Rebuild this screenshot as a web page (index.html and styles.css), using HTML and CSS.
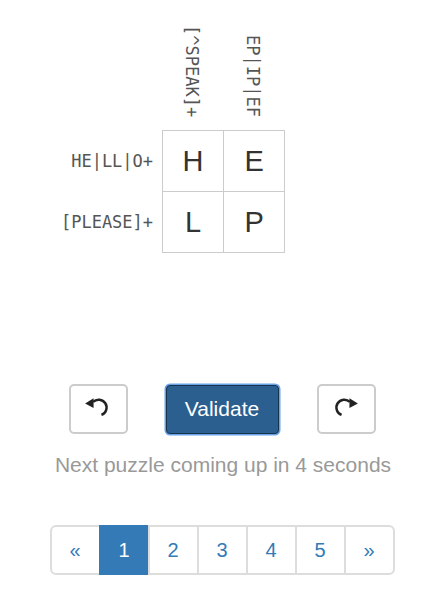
FILE: index.html
```html
<!DOCTYPE html>
<html>
<head>
<meta charset="utf-8">
<link rel="stylesheet" href="styles.css">
</head>
<body>
<div class="page">
  <table class="board">
    <tr class="heads">
      <th class="side"></th>
      <th class="colhead"><span class="vtext">[^SPEAK]+</span></th>
      <th class="colhead"><span class="vtext">EP|IP|EF</span></th>
      <th class="side"></th>
    </tr>
    <tr>
      <th class="rowhead">HE|LL|O+</th>
      <td class="cell">H</td>
      <td class="cell">E</td>
      <td class="side"></td>
    </tr>
    <tr>
      <th class="rowhead">[PLEASE]+</th>
      <td class="cell">L</td>
      <td class="cell">P</td>
      <td class="side"></td>
    </tr>
  </table>

  <div class="controls">
    <button class="btn icon-btn" aria-label="Undo">
      <svg class="ico" width="27" height="25" viewBox="0 0 24 22"><path d="M8.1 6.1 A7 7 0 1 1 15.5 17.6" fill="none" stroke="#222" stroke-width="2.2"/><path d="M1 7.5 L8.5 2.8 L8.5 11.5 Z" fill="#222"/></svg>
    </button>
    <button class="btn validate">Validate</button>
    <button class="btn icon-btn" aria-label="Redo">
      <svg class="ico" width="27" height="25" viewBox="0 0 24 22"><g transform="translate(24 0) scale(-1 1)"><path d="M8.1 6.1 A7 7 0 1 1 15.5 17.6" fill="none" stroke="#222" stroke-width="2.2"/><path d="M1 7.5 L8.5 2.8 L8.5 11.5 Z" fill="#222"/></g></svg>
    </button>
  </div>

  <p class="next">Next puzzle coming up in 4 seconds</p>

  <ul class="pager">
    <li><a>&laquo;</a></li>
    <li class="active"><a>1</a></li>
    <li><a>2</a></li>
    <li><a>3</a></li>
    <li><a>4</a></li>
    <li><a>5</a></li>
    <li><a>&raquo;</a></li>
  </ul>
</div>
</body>
</html>
```
FILE: styles.css
```css
html, body {
  margin: 0;
  padding: 0;
  background: #fff;
}
body {
  font-family: "Liberation Sans", Arial, sans-serif;
  color: #333;
}
.page {
  padding: 20px 0 0 16px;
  width: 414px;
}
.board {
  border-collapse: collapse;
  margin: 0 auto;
}
.side {
  width: 100px;
  padding: 0;
}
.heads th {
  height: 101px;
  padding: 0 0 9px 0;
  vertical-align: bottom;
}
.colhead {
  text-align: center;
  font-weight: normal;
}
.vtext {
  display: inline-block;
  writing-mode: vertical-rl;
  font-family: "DejaVu Sans Mono", monospace;
  font-size: 17px;
  color: #555;
  line-height: 1;
  margin-right: 4px;
}
.rowhead {
  font-family: "DejaVu Sans Mono", monospace;
  font-size: 17px;
  font-weight: normal;
  color: #555;
  text-align: right;
  padding: 0 9px 0 0;
  white-space: nowrap;
}
.cell {
  width: 60px;
  height: 60px;
  padding: 0;
  border: 1px solid #ccc;
  text-align: center;
  vertical-align: middle;
  font-size: 29px;
  color: #333;
}
.controls {
  display: flex;
  justify-content: center;
  align-items: center;
  gap: 38px;
  margin-top: 131px;
  padding-right: 2px;
}
.btn {
  font-family: "Liberation Sans", Arial, sans-serif;
  background: #fff;
  border: 2px solid #ccc;
  border-radius: 5px;
  padding: 0;
  margin: 0;
  display: flex;
  align-items: center;
  justify-content: center;
}
.icon-btn {
  width: 59px;
  height: 50px;
}
.ico {
  margin: -3px 2px 0 0;
}
.validate {
  width: 113px;
  height: 49px;
  background: #2a5f8f;
  border: 1px solid #17344f;
  box-shadow: 0 0 0 1.5px #6aa2e8;
  border-radius: 4px;
  color: #fff;
  font-size: 21px;
}
.next {
  margin: 19px 0 0 0;
  text-align: center;
  color: #999;
  font-size: 21px;
  line-height: 24px;
}
.pager {
  list-style: none;
  display: flex;
  justify-content: center;
  margin: 48px 0 0 0;
  padding: 0 2px 0 0;
}
.pager li {
  margin-left: -2px;
}
.pager li:first-child {
  margin-left: 0;
}
.pager a {
  display: flex;
  align-items: center;
  justify-content: center;
  width: 47px;
  height: 46px;
  border: 2px solid #ddd;
  color: #337ab7;
  font-size: 20px;
  background: #fff;
}
.pager li:first-child a {
  border-radius: 6px 0 0 6px;
}
.pager li:last-child a {
  border-radius: 0 6px 6px 0;
}
.pager .active a {
  background: #337ab7;
  border-color: #337ab7;
  color: #fff;
}
```
